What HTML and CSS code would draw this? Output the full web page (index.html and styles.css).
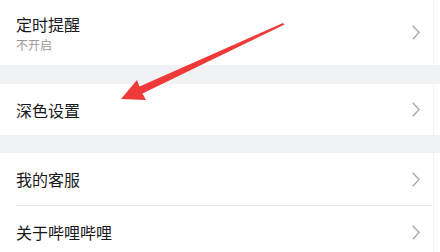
FILE: index.html
```
<!DOCTYPE html>
<html lang="zh">
<head>
<meta charset="utf-8">
<link rel="stylesheet" href="styles.css">
</head>
<body>
<div class="page">
  <div class="row row-tall">
    <div class="texts">
      <div class="title">定时提醒</div>
      <div class="sub">不开启</div>
    </div>
    <svg class="chev" viewBox="0 0 8 15" width="8" height="15"><polyline points="0.7,0.7 7.2,7.5 0.7,14.3" fill="none" stroke="#a5a5a5" stroke-width="1.3"/></svg>
  </div>
  <div class="gap"></div>
  <div class="row row-2">
    <div class="title">深色设置</div>
    <svg class="chev" viewBox="0 0 8 15" width="8" height="15"><polyline points="0.7,0.7 7.2,7.5 0.7,14.3" fill="none" stroke="#a5a5a5" stroke-width="1.3"/></svg>
  </div>
  <div class="gap gap-2"></div>
  <div class="row row-3">
    <div class="title">我的客服</div>
    <svg class="chev" viewBox="0 0 8 15" width="8" height="15"><polyline points="0.7,0.7 7.2,7.5 0.7,14.3" fill="none" stroke="#a5a5a5" stroke-width="1.3"/></svg>
  </div>
  <div class="sep"></div>
  <div class="row row-4">
    <div class="title">关于哔哩哔哩</div>
    <svg class="chev" viewBox="0 0 8 15" width="8" height="15"><polyline points="0.7,0.7 7.2,7.5 0.7,14.3" fill="none" stroke="#a5a5a5" stroke-width="1.3"/></svg>
  </div>
</div>
<svg class="arrow" viewBox="0 0 440 252" width="440" height="252">
  <polygon points="283,23 139.5,86.5 137,80 121,99 146,100 142.5,93.5 284.5,24.5" fill="#f03a3a"/>
</svg>
</body>
</html>
```
FILE: styles.css
```
html, body {
  margin: 0;
  padding: 0;
  background: #ffffff;
}
body {
  width: 440px;
  height: 252px;
  overflow: hidden;
  position: relative;
  font-family: "Noto Sans CJK SC", "Noto Sans", sans-serif;
}
.page {
  display: flex;
  flex-direction: column;
  width: 433px;
  border-right: 1px solid #f3f3f3;
}
.row {
  display: flex;
  align-items: center;
  justify-content: space-between;
  padding: 0 13px 0 16px;
  background: #fff;
}
.row-tall {
  height: 65px;
  padding-top: 1px;
  box-sizing: border-box;
}
.row-2 { height: 51px; }
.row-3 { height: 52px; }
.row-4 { height: 52px; }
.texts {
  display: flex;
  flex-direction: column;
  gap: 2px;
}
.title {
  font-size: 16px;
  line-height: 22px;
  color: #18191c;
}
.sub {
  font-size: 12px;
  line-height: 16px;
  color: #9a9a9a;
}
.chev {
  display: block;
  flex: none;
}
.row-tall .chev { margin-top: -2px; }
.gap {
  height: 19px;
  background: #f1f2f3;
  margin-right: -7px;
}
.gap-2 { height: 18px; }
.sep {
  height: 1px;
  background: #e8e9ea;
  margin-left: 16px;
}
.arrow {
  position: absolute;
  left: 0;
  top: 0;
}
```
